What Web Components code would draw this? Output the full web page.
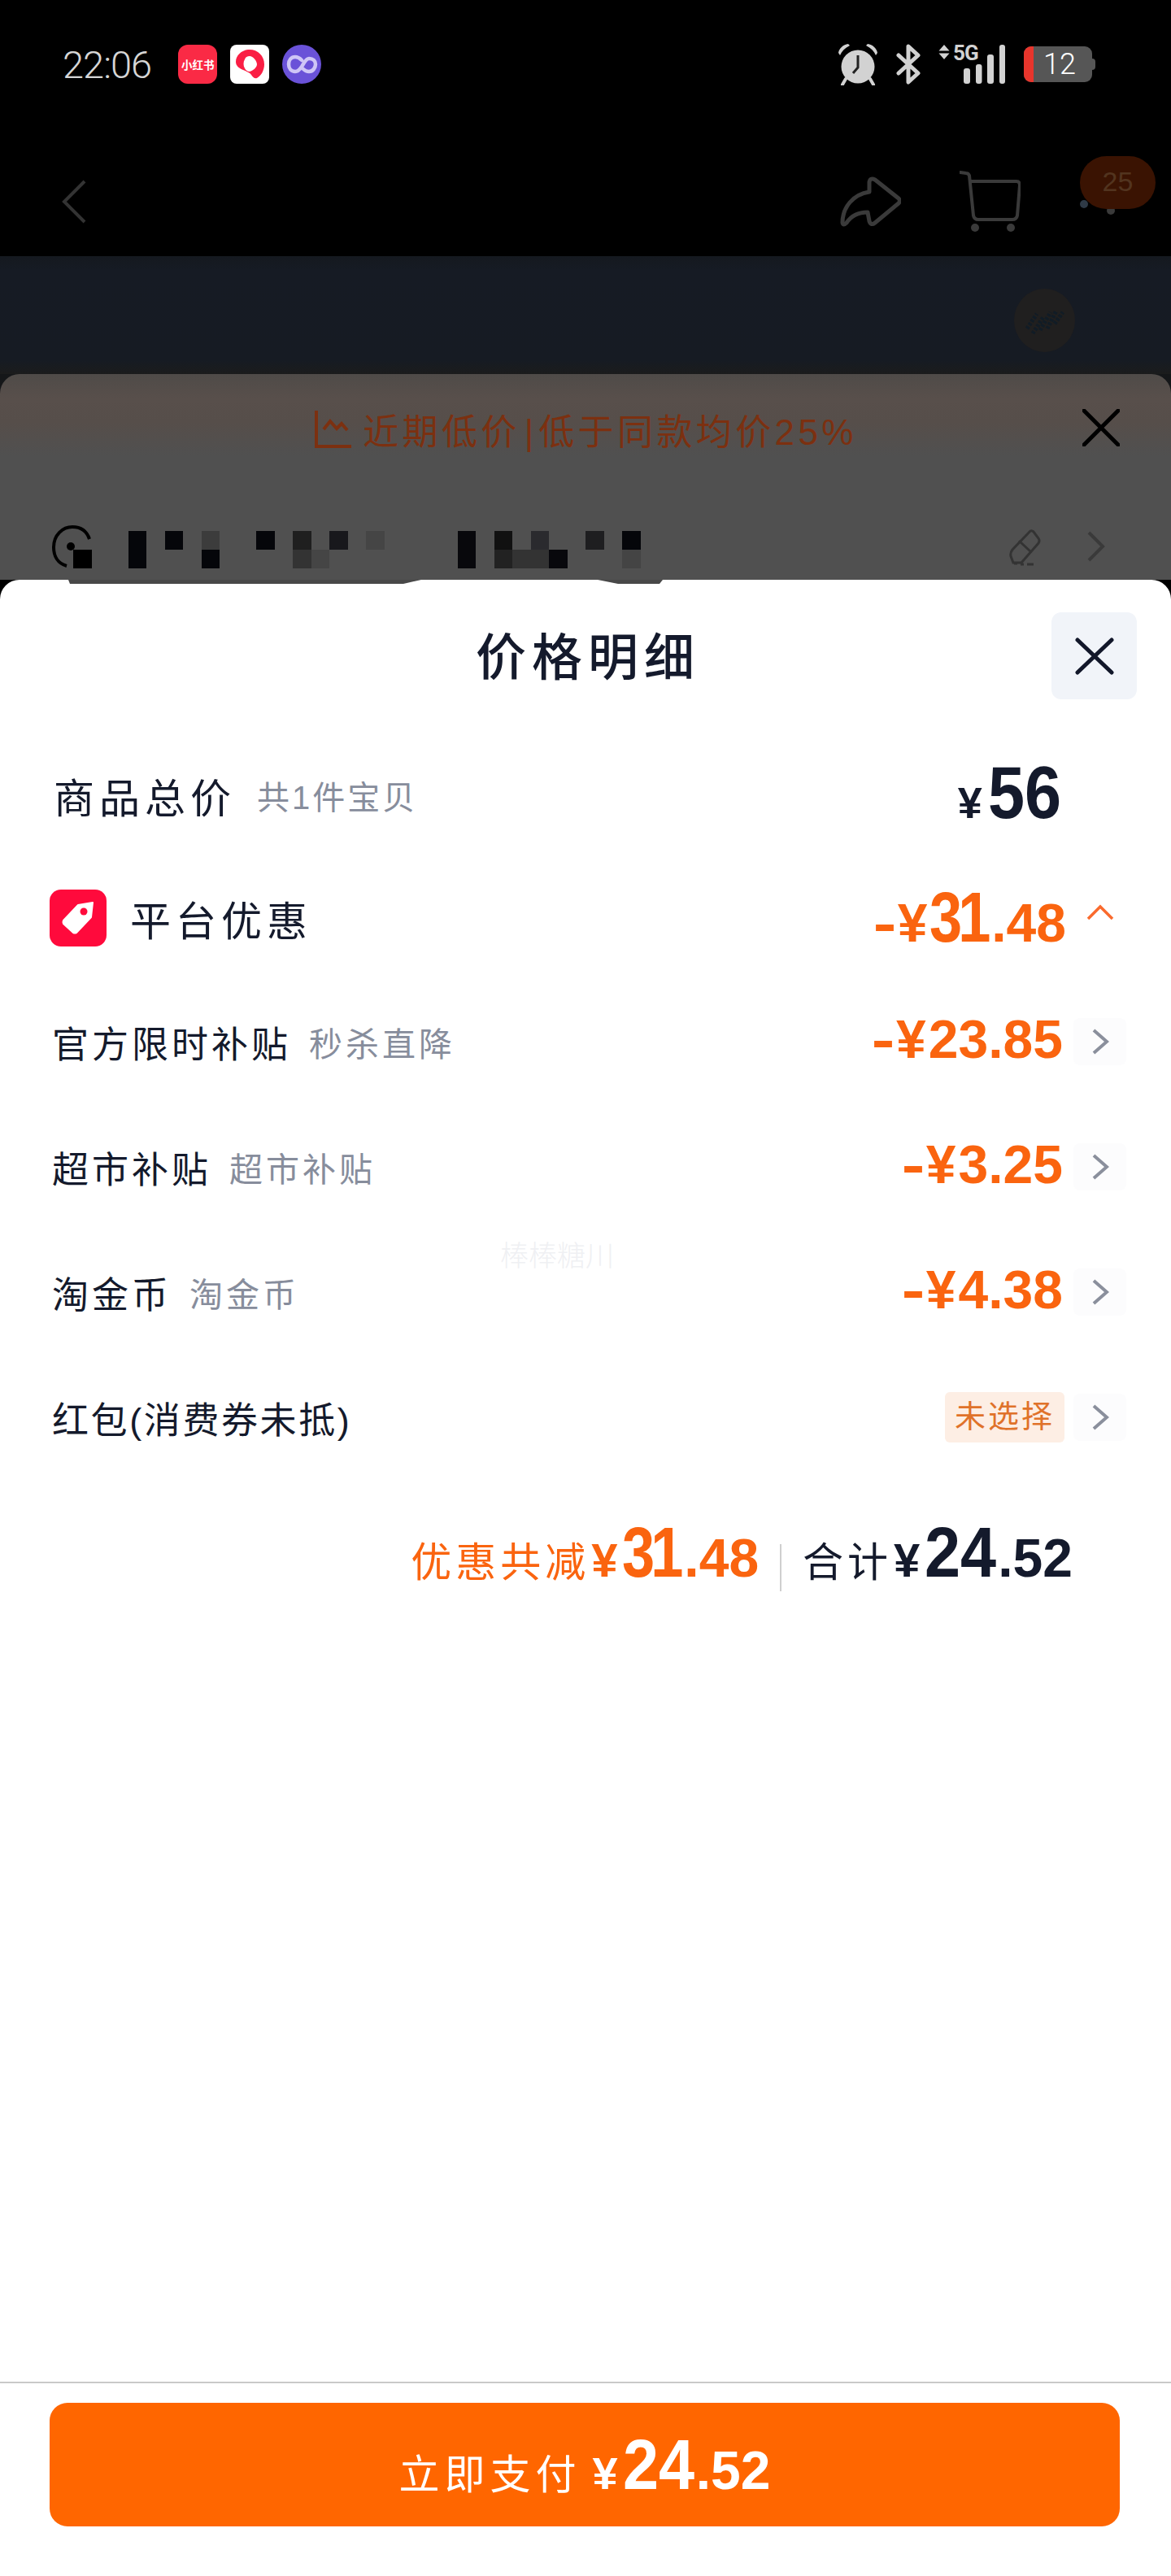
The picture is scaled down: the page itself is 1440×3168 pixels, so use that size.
<!DOCTYPE html>
<html lang="zh-CN">
<head>
<meta charset="utf-8">
<title>价格明细</title>
<style>
  html, body { margin: 0; padding: 0; background: #000; }
  body { width: 1440px; height: 3168px; overflow: hidden; font-family: "Liberation Sans", "Noto Sans CJK SC", sans-serif; }
</style>
</head>
<body>
<dim-header></dim-header>
<offer-sheet></offer-sheet>
<price-sheet>
  <price-row slot="rows" label="官方限时补贴" sub="秒杀直降" value="23.85"></price-row>
  <price-row slot="rows" label="超市补贴" sub="超市补贴" value="3.25"></price-row>
  <price-row slot="rows" label="淘金币" sub="淘金币" value="4.38"></price-row>
  <price-row slot="rows" label="红包(消费券未抵)" tag="未选择" dense></price-row>
</price-sheet>

<script>
const CJK = '"Liberation Sans", "Noto Sans CJK SC", sans-serif';

class DimHeader extends HTMLElement {
    connectedCallback() {
        this.attachShadow({ mode: 'open' });
        this.shadowRoot.innerHTML = `
            <style>
                :host { display: block; background: #000; }
                .status {
                    height: 52px;
                    padding: 53px 97px 55px 77px;
                    display: flex;
                    align-items: center;
                }
                .time {
                    font: 300 47px Roboto, sans-serif;
                    color: #d6d6d6;
                    letter-spacing: -1px;
                    margin-right: 33px;
                }
                .apps { display: flex; gap: 16px; }
                .app { width: 48px; height: 48px; display: block; }
                .red {
                    background: #fa2a45;
                    border-radius: 12px;
                    color: #fff;
                    font: 700 13.5px "Noto Sans CJK SC", sans-serif;
                    display: flex;
                    align-items: center;
                    justify-content: center;
                    white-space: nowrap;
                }
                .sys { margin-left: auto; display: flex; align-items: center; }
                .net { margin-left: 22px; width: 82px; height: 48px; position: relative; }
                .net svg { display: block; }
                .g5 {
                    position: absolute;
                    left: 18px; top: -3px;
                    font: 700 26px/26px Roboto, sans-serif;
                    letter-spacing: -1px;
                    color: #d2d2d2;
                }
                .battery {
                    margin-left: 23px;
                    width: 84px;
                    height: 44px;
                    background: #565656;
                    border-radius: 9px;
                    position: relative;
                    display: flex;
                    align-items: center;
                    justify-content: center;
                    color: #fff;
                    font: 300 36px Roboto, sans-serif;
                    padding-left: 4px;
                    box-sizing: border-box;
                }
                .battery::before {
                    content: '';
                    position: absolute;
                    left: 0; top: 0; bottom: 0;
                    width: 12px;
                    background: #e8352c;
                    border-radius: 9px 0 0 9px;
                }
                .battery::after {
                    content: '';
                    position: absolute;
                    right: -4px; top: 15px;
                    width: 4px; height: 14px;
                    background: #565656;
                    border-radius: 0 4px 4px 0;
                }
                .nav {
                    height: 135px;
                    padding: 20px 19px 0 75px;
                    display: flex;
                    align-items: center;
                }
                .share { margin-left: auto; }
                .cart { margin-left: 72px; }
                .more { margin-left: 73px; width: 93px; height: 76px; position: relative; }
                .badge {
                    position: absolute;
                    left: 0; top: -18px;
                    width: 93px; height: 65px;
                    border-radius: 33px;
                    background: #3a1302;
                    color: #52341f;
                    font: 400 34px "Liberation Sans", sans-serif;
                    text-align: center;
                    line-height: 62px;
                }
                .dot { position: absolute; border-radius: 50%; width: 10px; height: 10px; }
                .hero {
                    height: 145px;
                    background: linear-gradient(#15191f, #161b24 12%, #161b23 88%, #1b1c1c);
                    display: flex;
                    justify-content: flex-end;
                    align-items: flex-start;
                    padding-right: 118px;
                }
                .stamp {
                    margin-top: 40px;
                    width: 75px; height: 78px;
                    border-radius: 50%;
                    background: #201f1f;
                    display: flex;
                    align-items: center;
                    justify-content: center;
                }
            </style>
            <div class="status">
                <span class="time">22:06</span>
                <div class="apps">
                    <span class="app red">小红书</span>
                    <svg class="app" viewBox="0 0 48 48">
                        <rect width="48" height="48" rx="8" fill="#fff"/>
                        <path d="M22 6C33 5 42 13 42 24c0 8-4 14-9 17-3 1-5-1-7-4-2-3-6-4-10-6-5-2-9-5-9-10C7 13 14 7 22 6z" fill="#fa1e44"/>
                        <path d="M18 18c1-3 3-4 6-4 4 0 9 6 9 10s-5 8-9 9c-3 0-5-2-6-4-2-3-2-8 0-11z" fill="#fff"/>
                    </svg>
                    <svg class="app" viewBox="0 0 48 48">
                        <circle cx="24" cy="24" r="24" fill="#6a52d8"/>
                        <path d="M24 19c-2-2-5-4-8-4-5 0-8 4-8 9s3 9 8 9c4 0 6-3 8-6l3-5c2-3 4-5 6-5 5 0 8 3 8 7s-3 9-8 9c-3 0-5-1-7-3" fill="none" stroke="#cfc6f6" stroke-width="4.5" stroke-linecap="round"/>
                    </svg>
                </div>
                <div class="sys">
                    <svg width="50" height="52" viewBox="0 0 50 52">
                        <circle cx="25" cy="29" r="20.5" fill="#d2d2d2"/>
                        <path d="M1 12C2 6 7 2 13 1l2 2C9 6 5 10 3 15zM49 12C48 6 43 2 37 1l-2 2c6 3 10 7 12 12z" fill="#d2d2d2"/>
                        <path d="M10 44l-4 7M40 44l4 7" stroke="#d2d2d2" stroke-width="4" stroke-linecap="round"/>
                        <path d="M25 15v15l-6 7" fill="none" stroke="#222" stroke-width="3"/>
                    </svg>
                    <svg style="margin-left:22px" width="30" height="50" viewBox="0 0 30 50">
                        <path d="M3 14l24 22-12 11V3l12 11L3 36" fill="none" stroke="#d2d2d2" stroke-width="5" stroke-linejoin="round" stroke-linecap="round"/>
                    </svg>
                    <div class="net">
                        <svg width="82" height="48" viewBox="0 0 82 48">
                            <path d="M7 0l6.500 7.500H.5zM7 18L.5 10.500h13z" fill="#d2d2d2"/>
                            <rect x="31" y="29" width="8" height="19" rx="3" fill="#d2d2d2"/>
                            <rect x="46" y="24" width="7.500" height="24" rx="3" fill="#d2d2d2"/>
                            <rect x="60" y="12" width="8" height="36" rx="3" fill="#d2d2d2"/>
                            <rect x="75" y="0" width="7" height="48" rx="3" fill="#d2d2d2"/>
                        </svg>
                        <span class="g5">5G</span>
                    </div>
                    <div class="battery">12</div>
                </div>
            </div>
            <div class="nav">
                <svg width="32" height="54" viewBox="0 0 32 54">
                    <path d="M29 2L4 27l25 25" fill="none" stroke="#333" stroke-width="4"/>
                </svg>
                <svg class="share" width="75" height="62" viewBox="0 0 75 62">
                    <path d="M3 57C3 38 16 22 36 19V7q1-6 7-3l29 23q3 3 0 6L43 57q-5 4-7-2l-2-11C24 44 14 48 8 57q-4 4-5 0z" fill="none" stroke="#3a3a3a" stroke-width="5" stroke-linejoin="round"/>
                </svg>
                <svg class="cart" width="75" height="76" viewBox="0 0 75 76">
                    <path d="M1 2l7 1q3 0 4 3l5 49q1 5 6 5h42q5 0 6-5l3-37q0-5-4-5H13" fill="none" stroke="#3a3a3a" stroke-width="4" stroke-linecap="round"/>
                    <circle cx="19" cy="70" r="5" fill="#3a3a3a"/>
                    <circle cx="63" cy="70" r="5" fill="#3a3a3a"/>
                </svg>
                <div class="more">
                    <span class="dot" style="left:0;top:36px;background:#2f3a46"></span>
                    <span class="dot" style="left:33px;top:44px;background:#3a3a3a"></span>
                    <span class="badge">25</span>
                </div>
            </div>
            <div class="hero">
                <div class="stamp">
                    <svg width="48" height="40" viewBox="0 0 48 40">
                        <path d="M2 30L14 12M9 36L22 16M18 32L31 10M27 30L38 8M36 24L46 10" stroke="#111c26" stroke-width="5" stroke-dasharray="3 2"/>
                    </svg>
                </div>
            </div>
        `;
    }
}

class OfferSheet extends HTMLElement {
    connectedCallback() {
        this.attachShadow({ mode: 'open' });
        // the mosaic covers the blurred-out address line, cells are [col, row, colour]
        const cells = [
            [0, 2, '#000'], [3, 1, '#05060a'], [3, 2, '#05060a'], [5, 1, '#05060a'],
            [7, 1, '#3c3c3c'], [7, 2, '#05060a'], [10, 1, '#05060a'],
            [12, 1, '#1f1f1f'], [12, 2, '#333'], [13, 2, '#454545'],
            [14, 1, '#18181c'], [16, 1, '#454545'],
            [21, 1, '#08080c'], [21, 2, '#08080c'], [23, 1, '#111'], [23, 2, '#222'],
            [24, 2, '#333'], [25, 1, '#2a2a2e'], [25, 2, '#333'], [26, 2, '#08080c'],
            [28, 1, '#1e1e20'], [30, 1, '#05060a'], [30, 2, '#444']
        ];
        const mosaic = cells.map(c =>
            `<i style="grid-column:${c[0] + 1};grid-row:${c[1]};background:${c[2]}"></i>`).join('');
        this.shadowRoot.innerHTML = `
            <style>
                :host {
                    display: block;
                    height: 253px;
                    background: #151719;
                }
                .sheet {
                    height: 253px;
                    border-radius: 24px 24px 0 0;
                    background: linear-gradient(#4f4b48, #584f4b 30px, #564e4a 60px, #505050 100px);
                    font-family: ${CJK};
                }
                .banner {
                    height: 132px;
                    display: grid;
                    grid-template-columns: 1fr auto 1fr;
                    align-items: center;
                    padding: 0 63px;
                }
                .deal {
                    grid-column: 2;
                    display: flex;
                    align-items: center;
                    gap: 12px;
                    color: #7c3010;
                    font-size: 44px;
                    letter-spacing: 4.400px;
                    white-space: nowrap;
                    padding-top: 4px;
                }
                .deal b { font-weight: 400; margin: 0 6px 0 5px; letter-spacing: 0; }
                .x { grid-column: 3; justify-self: end; display: block; }
                .addr {
                    height: 60px;
                    padding: 61px 81px 0 65px;
                    display: flex;
                    align-items: flex-start;
                }
                .pin { overflow: visible; flex: none; width: 25px; height: 50px; margin-top: -7px; }
                .mosaic {
                    display: grid;
                    grid-template-columns: repeat(31, 22.5px);
                    grid-template-rows: 23px 23px;
                }
                .mosaic i { display: block; }
                .edit { margin-left: auto; margin-top: -3px; }
                .go { margin-left: 55px; }
            </style>
            <div class="sheet">
                <div class="banner">
                    <div class="deal">
                        <svg width="48" height="48" viewBox="0 0 48 48">
                            <path d="M3 1v44h43M12 24l8-10 8 9 6-6 7 8" fill="none" stroke="#7c3010" stroke-width="4"/>
                        </svg>
                        <span>近期低价<b>|</b>低于同款均价25%</span>
                    </div>
                    <svg class="x" width="46" height="46" viewBox="0 0 46 46">
                        <path d="M2 2l42 42M44 2L2 44" stroke="#000" stroke-width="5" stroke-linecap="round"/>
                    </svg>
                </div>
                <div class="addr">
                    <svg class="pin" viewBox="0 0 25 50">
                        <path d="M17 50C6 47 1 38 1 27 1 12 12 2 24 2c11 0 18 6 21 15" fill="none" stroke="#000" stroke-width="4"/>
                        <circle cx="22" cy="26" r="5" fill="#000"/>
                    </svg>
                    <div class="mosaic">${mosaic}</div>
                    <svg class="edit" width="42" height="46" viewBox="0 0 42 46">
                        <path d="M28 3L6 26q-3 4-2 8l3 8h10L38 18q2-3 0-6l-6-8q-2-2-4-1zM14 15l14 13M8 43h4M16 44h4M24 44h8" fill="none" stroke="#333" stroke-width="3"/>
                    </svg>
                    <svg class="go" width="23" height="38" viewBox="0 0 23 38">
                        <path d="M3 2l17 17L3 36" fill="none" stroke="#3a3a3a" stroke-width="4"/>
                    </svg>
                </div>
            </div>
        `;
    }
}

// shared css for the amount figures, big whole part and smaller cents
// the app's number font is narrower than Liberation, so the big digits get squeezed
const moneyCss = `
    .money { font-family: "Liberation Sans", sans-serif; font-weight: 700; white-space: nowrap; }
    .big {
        display: inline-block;
        font-size: 88px;
        transform: scaleX(.9);
        transform-origin: 0 50%;
        margin-right: -8px;
    }
    .big.one { letter-spacing: -6px; transform: scaleX(.82); margin-right: -10px; }
    .mid { font-size: 66px; }
    .dash { display: inline-block; font-size: 66px; transform: scaleX(1.3); margin-right: 5px; }
    .yen { font-size: 66px; margin-right: 3px; }
`;

class PriceRow extends HTMLElement {
    connectedCallback() {
        this.attachShadow({ mode: 'open' });
        const sub = this.getAttribute('sub');
        const value = this.getAttribute('value');
        const tag = this.getAttribute('tag');
        this.shadowRoot.innerHTML = `
            <style>
                :host { display: block; }
                ${moneyCss}
                .row {
                    height: 154px;
                    padding: 0 55px 0 64px;
                    display: flex;
                    align-items: center;
                    font-family: ${CJK};
                }
                .label { color: #141a2c; font-size: 45px; letter-spacing: 4px; white-space: nowrap; }
                :host([dense]) .label { letter-spacing: 2.600px; }
                .sub { color: #878d9c; font-size: 41px; letter-spacing: 4px; margin-left: 22px; white-space: nowrap; }
                .value { margin-left: auto; color: #fa640f; font-size: 66px; margin-top: -6px; }
                .tag {
                    margin-left: auto;
                    margin-right: -2px;
                    background: #fdeee4;
                    color: #e0722a;
                    font-size: 38px;
                    letter-spacing: 3px;
                    padding: 0 12px;
                    height: 62px;
                    line-height: 60px;
                    border-radius: 6px;
                    box-sizing: border-box;
                }
                .go {
                    margin-left: 13px;
                    width: 65px;
                    height: 58px;
                    background: #fcfcfd;
                    border-radius: 8px;
                    display: flex;
                    align-items: center;
                    justify-content: center;
                    flex: none;
                }
            </style>
            <div class="row">
                <span class="label">${this.getAttribute('label')}</span>
                ${sub ? `<span class="sub">${sub}</span>` : ''}
                ${value ? `<span class="value money"><span class="dash">-</span><span class="yen">¥</span>${value}</span>` : ''}
                ${tag ? `<span class="tag">${tag}</span>` : ''}
                <span class="go">
                    <svg width="22" height="34" viewBox="0 0 22 34">
                        <path d="M3 3l16 14L3 31" fill="none" stroke="#8a8f9c" stroke-width="4"/>
                    </svg>
                </span>
            </div>
        `;
    }
}

class PriceSheet extends HTMLElement {
    connectedCallback() {
        this.attachShadow({ mode: 'open' });
        this.shadowRoot.innerHTML = `
            <style>
                :host {
                    display: flex;
                    flex-direction: column;
                    height: 2455px;
                    position: relative;
                    background: #fff;
                    border-radius: 24px 24px 0 0;
                    font-family: ${CJK};
                }
                ${moneyCss}
                .smudge { position: absolute; left: 0; top: 0; }
                .head {
                    height: 107px;
                    padding: 40px 42px 0;
                    display: grid;
                    grid-template-columns: 1fr auto 1fr;
                    align-items: center;
                }
                .title {
                    grid-column: 2;
                    font-size: 62px;
                    font-weight: 500;
                    letter-spacing: 7px;
                    color: #141a2c;
                    line-height: 1;
                    padding: 6px 0 0 6px;
                }
                .close {
                    grid-column: 3;
                    justify-self: end;
                    width: 105px;
                    height: 107px;
                    border-radius: 12px;
                    background: #f1f4f9;
                    display: flex;
                    align-items: center;
                    justify-content: center;
                }
                .total, .platform {
                    height: 152px;
                    display: flex;
                    align-items: center;
                    font-family: ${CJK};
                }
                .total { margin-top: 42px; padding: 0 135px 0 66px; }
                .name { font-size: 50px; letter-spacing: 6px; color: #141a2c; white-space: nowrap; }
                .count { font-size: 40px; letter-spacing: 3px; color: #878d9c; margin-left: 26px; white-space: nowrap; }
                .sum { margin-left: auto; color: #141a2c; margin-top: -6px; }
                .sum .y { font-size: 54px; margin-right: 7px; }
                .sum .n {
                    display: inline-block;
                    font-size: 90px;
                    transform: scaleX(.9);
                    transform-origin: 0 50%;
                    margin-right: -10px;
                }
                .platform { height: 150px; padding: 0 70px 0 61px; }
                .platform .name { margin-left: 29px; }
                .cut { margin-left: auto; color: #fa640f; margin-top: -2px; display: flex; align-items: baseline; }
                .cut .up { align-self: center; margin-left: 25px; margin-top: -12px; }
                .summary {
                    height: 140px;
                    padding: 0 121px 0 0;
                    display: flex;
                    justify-content: flex-end;
                    align-items: baseline;
                    margin-top: 38px;
                    font-family: ${CJK};
                    white-space: nowrap;
                }
                .summary .txt { font-size: 50px; letter-spacing: 5px; }
                .summary .y { font-size: 58px; margin: 0 6px 0 2px; }
                .off { color: #fa640f; }
                .all { color: #141a2c; }
                .rule { width: 2px; height: 58px; background: #cfcfcf; margin: 0 26px 0 26px; align-self: center; }
                .spacer { flex: 1; }
                .foot { border-top: 2px solid #c9c9c9; padding: 24px 63px 61px 61px; }
                .pay {
                    height: 152px;
                    border-radius: 22px;
                    background: #ff6600;
                    color: #fff;
                    display: flex;
                    justify-content: center;
                    align-items: baseline;
                    line-height: 152px;
                    white-space: nowrap;
                }
                .pay .txt { font-size: 50px; letter-spacing: 6px; }
                .pay .y { font-size: 56px; margin: 0 6px 0 14px; }
                .mark {
                    position: absolute;
                    left: 615px;
                    top: 803px;
                    font-size: 35px;
                    font-weight: 300;
                    color: #eff0f3;
                    white-space: nowrap;
                }
            </style>
            <svg class="smudge" width="830" height="9" viewBox="0 0 830 9">
                <path d="M84 0l2 5h410l22-5zM735 0l25 5h51l4-5z" fill="#484848"/>
            </svg>
            <div class="head">
                <div class="title">价格明细</div>
                <div class="close">
                    <svg width="48" height="46" viewBox="0 0 48 46">
                        <path d="M3 3l42 40M45 3L3 43" stroke="#12172a" stroke-width="5" stroke-linecap="round"/>
                    </svg>
                </div>
            </div>
            <div class="total">
                <span class="name">商品总价</span>
                <span class="count">共1件宝贝</span>
                <span class="sum money"><span class="y">¥</span><span class="n">56</span></span>
            </div>
            <div class="platform">
                <svg width="70" height="70" viewBox="0 0 70 70">
                    <rect width="70" height="70" rx="14" fill="#ff0a3c"/>
                    <path d="M53 16L35 19 17 38q-1 2 0 4l12 11q2 1 4 0l18-19z" fill="#fff" stroke="#fff" stroke-width="2" stroke-linejoin="round"/>
                    <circle cx="42" cy="27" r="4.500" fill="#ff0a3c"/>
                </svg>
                <span class="name">平台优惠</span>
                <span class="cut money">
                    <span class="dash">-</span><span class="yen">¥</span><span class="big one">31</span><span class="mid">.48</span>
                    <svg class="up" width="34" height="20" viewBox="0 0 34 20">
                        <path d="M2 18L17 3l15 15" fill="none" stroke="#fa6a2d" stroke-width="3.500"/>
                    </svg>
                </span>
            </div>
            <slot name="rows"></slot>
            <div class="summary">
                <span class="txt off">优惠共减</span>
                <span class="money off"><span class="y">¥</span><span class="big one">31</span><span class="mid">.48</span></span>
                <span class="rule"></span>
                <span class="txt all">合计</span>
                <span class="money all"><span class="y">¥</span><span class="big">24</span><span class="mid">.52</span></span>
            </div>
            <div class="spacer"></div>
            <div class="foot">
                <div class="pay">
                    <span class="txt">立即支付</span>
                    <span class="money"><span class="y">¥</span><span class="big">24</span><span class="mid">.52</span></span>
                </div>
            </div>
            <div class="mark">棒棒糖川</div>
        `;
    }
}

customElements.define('dim-header', DimHeader);
customElements.define('offer-sheet', OfferSheet);
customElements.define('price-row', PriceRow);
customElements.define('price-sheet', PriceSheet);
</script>
</body>
</html>
